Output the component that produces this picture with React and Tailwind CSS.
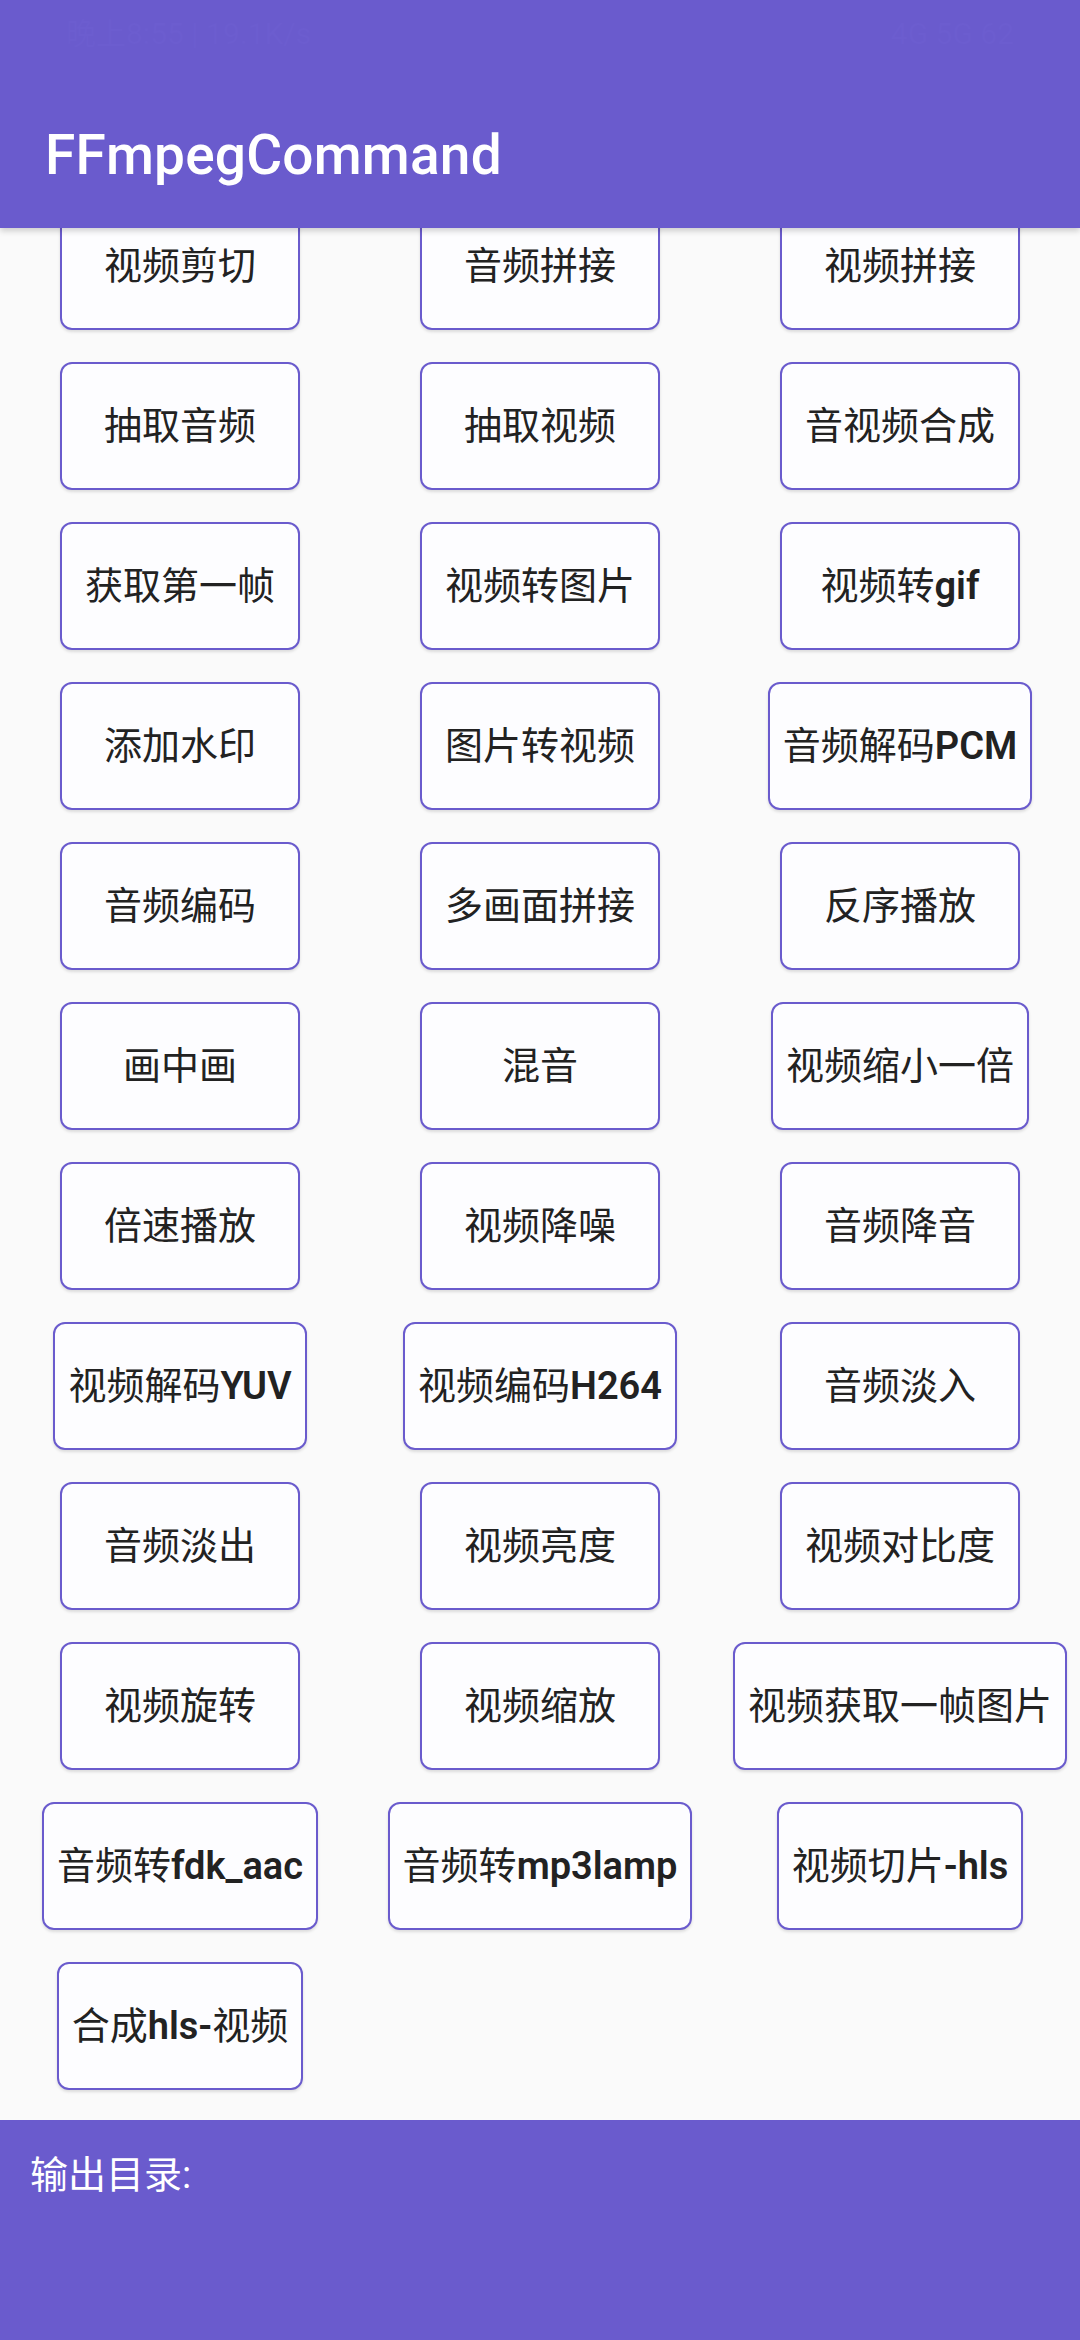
import React from 'react';

const items = [
  '视频剪切', '音频拼接', '视频拼接',
  '抽取音频', '抽取视频', '音视频合成',
  '获取第一帧', '视频转图片', '视频转gif',
  '添加水印', '图片转视频', '音频解码PCM',
  '音频编码', '多画面拼接', '反序播放',
  '画中画', '混音', '视频缩小一倍',
  '倍速播放', '视频降噪', '音频降音',
  '视频解码YUV', '视频编码H264', '音频淡入',
  '音频淡出', '视频亮度', '视频对比度',
  '视频旋转', '视频缩放', '视频获取一帧图片',
  '音频转fdk_aac', '音频转mp3lamp', '视频切片-hls',
  '合成hls-视频',
];

// latin runs look heavier than the CJK glyphs on the device
function Label({ text }) {
  const parts = text.match(/[\u4e00-\u9fff]+|[^\u4e00-\u9fff]+/g);
  return (
    <span>
      {parts.map((p, i) =>
        /[\u4e00-\u9fff]/.test(p) ? (
          <span key={i}>{p}</span>
        ) : (
          <span key={i} className="font-semibold">{p}</span>
        )
      )}
    </span>
  );
}

export default function App() {
  return (
    <div
      className="w-[1080px] h-[2340px] flex flex-col bg-[#fafafa] overflow-hidden"
      style={{ fontFamily: 'Roboto, "Noto Sans CJK SC", sans-serif' }}
    >
      {/* App bar */}
      <div className="relative z-10 h-[228px] shrink-0 bg-[#6a5bcd] shadow-[0_3px_6px_rgba(0,0,0,0.18)]">
        <div className="h-[66px] flex items-center justify-between px-[66px] text-[30px] text-[#6c5dcf]">
          <span>晚上8:55 | 19.1K/s</span>
          <span>4G 5G 62</span>
        </div>
        <div className="h-[162px] pt-[16px] flex items-center px-[45px]">
          <h1 className="text-[55px] leading-none font-medium text-white tracking-[0.2px]">FFmpegCommand</h1>
        </div>
      </div>

      {/* Scrolled button grid */}
      <div className="flex-1 overflow-hidden">
        <div className="grid grid-cols-3 gap-y-8 mt-[-26px]">
          {items.map((t) => (
            <div key={t} className="flex justify-center">
              <button className="h-[128px] min-w-[240px] px-[13px] flex items-center justify-center bg-[#fdfdff] border-[2.5px] border-[#6a5bcd] rounded-[12px] text-[38px] leading-none text-[#222222] whitespace-nowrap shadow-[0_2px_3px_rgba(0,0,0,0.12)]">
                <Label text={t} />
              </button>
            </div>
          ))}
        </div>
      </div>

      {/* Output panel */}
      <div className="h-[220px] shrink-0 bg-[#6a5bcd] px-[30px] pt-[36px]">
        <div className="text-[38px] leading-none text-white">输出目录:</div>
      </div>
    </div>
  );
}
